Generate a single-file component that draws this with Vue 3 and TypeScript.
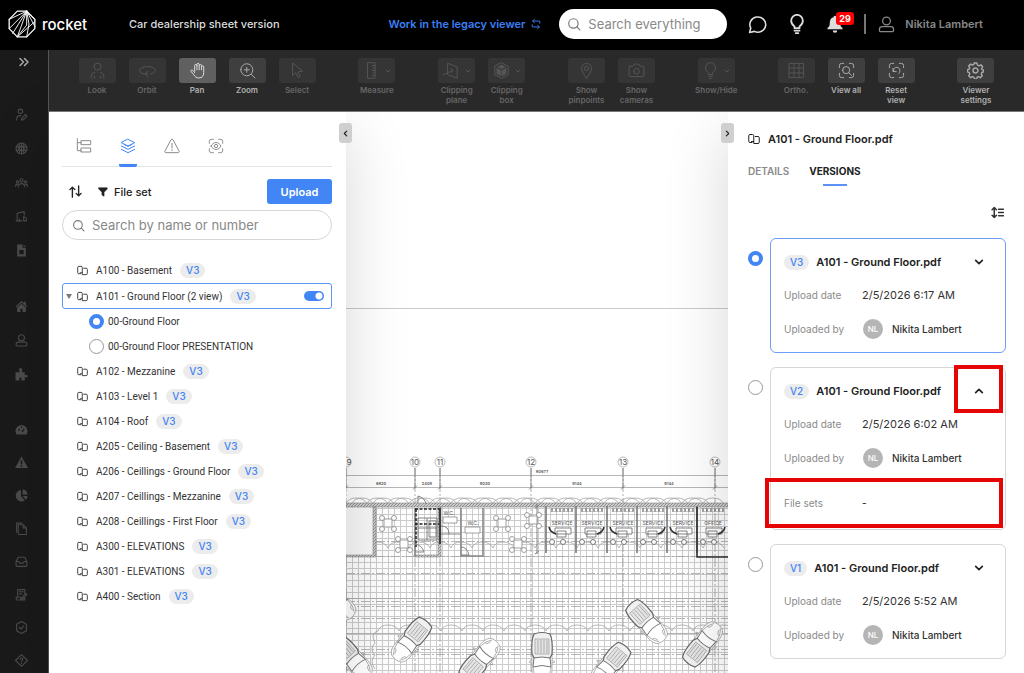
<script setup lang="ts">
import { h, ref } from 'vue'
import type { FunctionalComponent } from 'vue'

interface Shape {
  d: string
  fill?: boolean
  w?: number
}

const circle = (cx: number, cy: number, r: number): string =>
  `M${cx - r} ${cy}a${r} ${r} 0 1 0 ${2 * r} 0a${r} ${r} 0 1 0 ${-2 * r} 0z`

const corners = 'M2 8V5a3 3 0 0 1 3-3h3M16 2h3a3 3 0 0 1 3 3v3M22 16v3a3 3 0 0 1-3 3h-3M8 22H5a3 3 0 0 1-3-3v-3'
const bulb = 'M9 17v-2c-2-1.500-4-3.500-4-7a7 7 0 0 1 14 0c0 3.500-2 5.500-4 7v2z'

const icons: Record<string, Shape[]> = {
  logo: [
    { d: 'M8 1h8l7 7v8l-7 7H8l-7-7V8z', w: 1.1 },
    { d: 'M16 1L1 8M16 1L1 16M16 1L4 20M16 1L8 23M16 1l0 12l-8 10M16 1l2 11l-2 11M16 1l7 7M16 1l7 13M23 10L8 23', w: 0.8 },
  ],
  search: [{ d: circle(11, 11, 8) }, { d: 'M17 17l5 5' }],
  swap: [{ d: 'M21 10V5H4M8 1L4 5l4 4M3 14v5h17M16 15l4 4l-4 4' }],
  chat: [{ d: 'M2 22l1.500-5.500A10 9.600 0 1 1 8 20.700z' }],
  bulb: [{ d: bulb }, { d: 'M9 20h6M10.500 23h3' }],
  bell: [{ d: 'M12 1a2 2 0 0 1 2 2c4 1 5 4 5 8c0 4 1 5 3 6v2H2v-2c2-1 3-2 3-6c0-4 1-7 5-8a2 2 0 0 1 2-2zM9 20.500h6a3 3 0 0 1-6 0z', fill: true, w: 0 }],
  user: [{ d: circle(12, 7, 5.5) }, { d: 'M6 15h12c2.500 0 4 1.500 4 4v1.500c0 1-.5 1.500-1.500 1.500h-17C2.500 22 2 21.500 2 20.500V19c0-2.500 1.500-4 4-4z' }],
  dblright: [{ d: 'M4 5l7 7l-7 7M13 5l7 7l-7 7' }],
  look: [{ d: circle(12, 6.5, 5) }, { d: 'M3 23v-2c0-3.500 2-6 5-6.500M21 23v-2c0-3.500-2-6-5-6.500M7.500 23v-3M16.500 23v-3' }],
  orbit: [{ d: 'M8 17C4 16.500 1 14.500 1 12c0-3 5-5.500 11-5.500S23 9 23 12c0 2.500-3 4.500-7 5M12 13l-3 4l4 3.500M9 17h3' }],
  pan: [{ d: 'M8 13V5a1.600 1.600 0 0 1 3.200 0v-1.500a1.600 1.600 0 0 1 3.200 0V5a1.600 1.600 0 0 1 3.200 0v2a1.600 1.600 0 0 1 3.200 0v8c0 5-2.500 7.500-6.500 7.500c-4.300 0-6-2-7.500-4.500L3 13.500c-1-2 1-3 2.500-1.500L8 15M11.200 5v6M14.400 5v6M17.600 7v4' }],
  zoom: [{ d: circle(11, 11, 8.5) }, { d: 'M17.500 17.500l5 5M11 7.500v7M7.500 11h7' }],
  select: [{ d: 'M5 2v17l4.500-4l3.500 7l3-1.500l-3.500-6.500l6-1z' }],
  measure: [{ d: 'M7 1h10v22H7zM17 5h-4M17 8.500h-3M17 12h-4M17 15.500h-3M17 19h-4' }],
  clipplane: [{ d: 'M7 2l13 5v16L7 18zM1 18l12-6M11 9.500l3 2.500l-2 3' }],
  clipbox: [{ d: 'M12 1l9.500 5v12L12 23l-9.500-5V6z' }, { d: 'M5 8.500l6.500 3.200v8.300L5 16.700zM12.500 11.700L19 8.500v8.200L12.500 20zM12 4l6 3l-6 3l-6-3z', fill: true, w: 0.4 }],
  pin: [{ d: 'M12 23c-3-5-7-9-7-14a7 7 0 0 1 14 0c0 5-4 9-7 14z' }, { d: circle(12, 9, 3) }],
  camera: [{ d: 'M3 6h4l2-3h6l2 3h4a1.500 1.500 0 0 1 1.500 1.500V19a1.500 1.500 0 0 1-1.500 1.500H3A1.500 1.500 0 0 1 1.500 19V7.500A1.500 1.500 0 0 1 3 6z' }, { d: circle(12, 13, 4) }],
  grid: [{ d: 'M2 2h20v20H2zM2 8.500h20M2 15.500h20M8.500 2v20M15.500 2v20' }],
  viewall: [{ d: corners }, { d: circle(11.5, 11.5, 5) }, { d: 'M15 15l4 4' }],
  reset: [{ d: corners }, { d: 'M7 9v4.500h4.500M7.500 13C7.500 9.500 10 7 13 7.500c4 .8 5 5.500 2.500 8.500' }],
  gear: [
    { d: 'M10 1.500h4l.8 3l2 .9l2.800-1.500l2.500 2.800l-1.500 2.600l.8 1.700l2.100.5v2.500l-2.600.8l-.8 2l1.500 2.700l-2.800 2.600l-2.700-1.500l-1.800.8l-.8 2.600h-3l-.8-2.600l-2-.8l-2.600 1.500l-2.700-2.700l1.500-2.700l-.8-1.900l-2.600-.8v-3l2.600-.8l.8-1.800l-1.500-2.700l2.700-2.700l2.600 1.500l1.800-.8z', w: 2 },
    { d: circle(12, 12, 3.5), w: 2 },
  ],
  down: [{ d: 'M4 8l8 8l8-8' }],
  up: [{ d: 'M4 16l8-8l8 8' }],
  left: [{ d: 'M16 4l-8 8l8 8' }],
  right: [{ d: 'M8 4l8 8l-8 8' }],
  tree: [{ d: 'M2 1v18h6M2 7h6M8 4h14v6H8zM8 15h14v6H8z' }],
  layers: [{ d: 'M12 2l10 5l-10 5L2 7zM2 12l10 5l10-5M2 17l10 5l10-5M6 9.500l6 3l6-3' }],
  warn: [{ d: 'M12 2c.8 0 1.300.3 1.700 1L22.500 19.500c.6 1.200 0 2.500-1.500 2.500H3c-1.500 0-2.100-1.300-1.500-2.500L10.300 3c.4-.7.9-1 1.700-1zM12 8v7M12 17.500v1.500' }],
  eye: [{ d: corners }, { d: 'M4.500 12c3.500-7 11.500-7 15 0c-3.500 7-11.500 7-15 0z' }, { d: circle(12, 12, 2.5) }],
  sort: [{ d: 'M7 21V5M3 9l4-4l4 4M17 3v16M13 15l4 4l4-4' }],
  funnel: [{ d: 'M2 2h20v3l-7.500 7.500V22l-5-3v-6.500L2 5z', fill: true }],
  sheet: [{ d: 'M8 19H4a2.500 2.500 0 0 1-2.500-2.500v-11A2.500 2.500 0 0 1 4 3h5a2.500 2.500 0 0 1 2.500 2.500V17H7M14.500 7H20a2.500 2.500 0 0 1 2.500 2.500v9A2.500 2.500 0 0 1 20 21h-8.500V17' }],
  density: [{ d: 'M6 3v18M2 7l4-4l4 4M2 17l4 4l4-4M14 6h9M14 12h9M14 18h9' }],
  collab: [{ d: circle(10, 6, 4) }, { d: 'M3 22c0-5 2-8 6-8h2M12 20l7-8l3 3l-7 7h-3z' }],
  globe: [{ d: circle(12, 12, 10) }, { d: circle(12, 12, 4.5) }, { d: 'M2 9h20M2 15h20M12 2v20M8 3v18M16 3v18' }],
  group: [{ d: circle(12, 8, 3) }, { d: circle(4.5, 11, 2) }, { d: circle(19.5, 11, 2) }, { d: 'M6 20c0-8 12-8 12 0M1 19c0-3 1-4 4-4M23 19c0-3-1-4-4-4' }],
  site: [{ d: 'M4 19V6l13-3v6M2 20h11M16 20v-8l5 3v5zM8 20v-4' }],
  doc: [{ d: 'M4 1h10v6h6v16H4zM16 1l4 4h-4zM8 11v8h8v-8z', fill: true, w: 0 }],
  home: [{ d: 'M1 12L12 2l4 4V3h4v6l3 3l-1.500 1.500L12 5L2.500 13.500zM4 14l8-7l8 7v8h-6v-6h-4v6H4z', fill: true, w: 0 }],
  puzzle: [{ d: 'M1 8h7V5a3 3 0 1 1 5 0v3h5v5h5v4h-5v6h-6v-5H8v5H1z', fill: true, w: 0 }],
  gauge: [{ d: 'M3 21A11 11 0 1 1 21 21zM6 11v3h3v-3zM11 6v3h2V6zM16 10l-4 6l2 1l4-6z', fill: true, w: 0 }],
  alert: [{ d: 'M12 1l12 21H0zM10.500 8v7h3V8zM10.500 17v3h3v-3z', fill: true, w: 0 }],
  pie: [{ d: 'M11 2v11l7 8A10.500 10.500 0 1 1 11 2zM14 1c5 0 9 4 9 9h-9zM14 13h9c0 3-1 5-3 7z', fill: true, w: 0 }],
  copy: [{ d: 'M6 5h9l6 6v12H8a2 2 0 0 1-2-2zM15 5v6h6M3 19V2h10' }],
  inbox: [{ d: 'M2 12l4-8h12l4 8v7a2 2 0 0 1-2 2H4a2 2 0 0 1-2-2zM2 12h5l2 3h6l2-3h5' }],
  script: [{ d: 'M5 17V3h13v7M8 7h7M8 11h5M2 17h9v5H4c-2 0-2-2-2-5zM11 22l3-1l8-9l-2-2l-8 9zM11 22h7v-4' }],
  shield: [{ d: 'M12 1l9 5v12l-9 5l-9-5V6zM8 12l3 3l5-6' }],
  help: [{ d: 'M12 1l11 11l-11 11L1 12zM9.500 9.500c0-3 5-3 5 0c0 2-2.500 2-2.500 4M12 16v1.500' }],
}

const Icon: FunctionalComponent<{ name: string; size?: number; stroke?: number }> = (props) =>
  h(
    'svg',
    { viewBox: '0 0 24 24', width: props.size ?? 16, height: props.size ?? 16, 'aria-hidden': 'true' },
    icons[props.name].map((s) =>
      h('path', {
        d: s.d,
        fill: s.fill ? 'currentColor' : 'none',
        'fill-rule': 'evenodd',
        stroke: 'currentColor',
        'stroke-width': s.w ?? props.stroke ?? 1.5,
        'stroke-linejoin': 'round',
        'stroke-linecap': 'round',
      }),
    ),
  )
Icon.props = ['name', 'size', 'stroke']

interface Tool {
  label: string
  icon: string
  state?: 'on' | 'active'
  menu?: boolean
}
const toolGroups: Tool[][] = [
  [
    { label: 'Look', icon: 'look' },
    { label: 'Orbit', icon: 'orbit' },
    { label: 'Pan', icon: 'pan', state: 'active' },
    { label: 'Zoom', icon: 'zoom', state: 'on' },
    { label: 'Select', icon: 'select' },
  ],
  [{ label: 'Measure', icon: 'measure', menu: true }],
  [
    { label: 'Clipping\nplane', icon: 'clipplane', menu: true },
    { label: 'Clipping\nbox', icon: 'clipbox', menu: true },
  ],
  [
    { label: 'Show\npinpoints', icon: 'pin' },
    { label: 'Show\ncameras', icon: 'camera' },
  ],
  [{ label: 'Show/Hide', icon: 'bulb', menu: true }],
  [
    { label: 'Ortho.', icon: 'grid' },
    { label: 'View all', icon: 'viewall', state: 'on' },
    { label: 'Reset\nview', icon: 'reset', state: 'on' },
  ],
  [{ label: 'Viewer\nsettings', icon: 'gear', state: 'on' }],
]

const railGroups = [
  ['collab', 'globe', 'group', 'site', 'doc'],
  ['home', 'user', 'puzzle'],
  ['gauge', 'alert', 'pie', 'copy', 'inbox', 'script', 'shield', 'help'],
]

const panelTabs = ['tree', 'layers', 'warn', 'eye']

interface Sheet {
  name: string
  views?: string[]
}
const sheets: Sheet[] = [
  { name: 'A100 - Basement' },
  { name: 'A101 - Ground Floor (2 view)', views: ['00-Ground Floor', '00-Ground Floor PRESENTATION'] },
  { name: 'A102 - Mezzanine' },
  { name: 'A103 - Level 1' },
  { name: 'A104 - Roof' },
  { name: 'A205 - Ceiling - Basement' },
  { name: 'A206 - Ceillings - Ground Floor' },
  { name: 'A207 - Ceillings - Mezzanine' },
  { name: 'A208 - Ceillings - First Floor' },
  { name: 'A300 - ELEVATIONS' },
  { name: 'A301 - ELEVATIONS' },
  { name: 'A400 - Section' },
]

interface Version {
  id: string
  date: string
}
const versions: Version[] = [
  { id: 'V3', date: '2/5/2026 6:17 AM' },
  { id: 'V2', date: '2/5/2026 6:02 AM' },
  { id: 'V1', date: '2/5/2026 5:52 AM' },
]

const activeView = ref('00-Ground Floor')
const activeVersion = ref('V3')
const expanded = ref('V2')
const sheetVisible = ref(true)

const axes = [
  { x: 346, label: 349, n: '9' },
  { x: 415, label: 415, n: '10' },
  { x: 440, label: 440, n: '11' },
  { x: 531, label: 531, n: '12' },
  { x: 623, label: 623, n: '13' },
  { x: 715, label: 715, n: '14' },
]
const spans = [
  { x: 381, t: '6820' },
  { x: 427, t: '2408' },
  { x: 485, t: '9030' },
  { x: 577, t: '9144' },
  { x: 669, t: '9144' },
]
const tables = [[388, 523], [404, 544], [502, 523], [518, 544], [533, 520]]
const booths = [546, 576, 607, 637, 667, 697]
const cars = [
  [411, 640, 39], [480, 660, 221], [542, 657, 0], [647, 622, -42],
  [703, 644, 218], [610, 665, 40], [352, 658, -42], [334, 600, -50],
]
const clouds = (x: number, y: number, n: number): string => `M${x} ${y}` + 'q2-6 10-6t11 6'.repeat(n)
</script>

<template>
  <div class="app">
    <header class="top">
      <a class="brand" href="#"><Icon name="logo" :size="28" /><span>rocket</span></a>
      <h1>Car dealership sheet version</h1>
      <a class="legacy" href="#">Work in the legacy viewer <Icon name="swap" :size="10" :stroke="2.2" /></a>
      <label class="global-search">
        <Icon name="search" :size="14" :stroke="2" />
        <input type="search" placeholder="Search everything" aria-label="Search everything" />
      </label>
      <button class="top-btn" aria-label="Chat"><Icon name="chat" :size="19" :stroke="2" /></button>
      <button class="top-btn" aria-label="Tips"><Icon name="bulb" :size="20" :stroke="2.2" /></button>
      <button class="top-btn bell" aria-label="Notifications">
        <Icon name="bell" :size="18" /><span class="count">29</span>
      </button>
      <button class="account"><Icon name="user" :size="17" :stroke="1.8" /><span>Nikita Lambert</span></button>
    </header>

    <div class="body">
      <nav class="rail" aria-label="Main">
        <button class="expand" aria-label="Expand menu"><Icon name="dblright" :size="12" :stroke="3" /></button>
        <div v-for="(group, g) in railGroups" :key="g" class="rail-group">
          <a v-for="item in group" :key="item" href="#" :aria-label="item">
            <Icon :name="item" :size="13" :stroke="2" />
          </a>
        </div>
      </nav>

      <div class="work">
        <div class="toolbar">
          <div v-for="(group, g) in toolGroups" :key="g" class="tool-group">
            <button v-for="tool in group" :key="tool.label" class="tool" :class="tool.state">
              <span class="tile">
                <Icon :name="tool.icon" :size="17" :stroke="1.4" />
                <Icon v-if="tool.menu" class="caret" name="down" :size="6" :stroke="4" />
              </span>
              <span class="tool-label">{{ tool.label }}</span>
            </button>
          </div>
        </div>

        <div class="stage">
          <aside class="sheets">
            <div class="icon-tabs" role="tablist">
              <button
                v-for="tab in panelTabs"
                :key="tab"
                role="tab"
                :aria-label="tab"
                :aria-selected="tab === 'layers'"
                :class="{ current: tab === 'layers' }"
              >
                <Icon :name="tab" :size="16" :stroke="1.5" />
              </button>
            </div>
            <div class="filter">
              <button class="plain" aria-label="Sort"><Icon name="sort" :size="15" :stroke="2.2" /></button>
              <button class="plain"><Icon name="funnel" :size="10" />File set</button>
              <button class="upload">Upload</button>
            </div>
            <label class="sheet-search">
              <Icon name="search" :size="13" :stroke="2" />
              <input type="search" placeholder="Search by name or number" aria-label="Search by name or number" />
            </label>
            <ul class="tree">
              <li v-for="sheet in sheets" :key="sheet.name">
                <div class="row" :class="{ selected: sheet.views }">
                  <span v-if="sheet.views" class="twisty"></span>
                  <Icon name="sheet" :size="11" :stroke="2" />
                  <span>{{ sheet.name }}</span>
                  <span class="pill">V3</span>
                  <input
                    v-if="sheet.views"
                    v-model="sheetVisible"
                    class="switch"
                    type="checkbox"
                    role="switch"
                    aria-label="Show sheet"
                  />
                </div>
                <label v-for="view in sheet.views" :key="view" class="row view">
                  <input v-model="activeView" class="radio" type="radio" name="view" :value="view" />
                  <span>{{ view }}</span>
                </label>
              </li>
            </ul>
            <button class="handle handle-left" aria-label="Collapse sheets"><Icon name="left" :size="7" :stroke="4" /></button>
          </aside>

          <main class="canvas">
            <svg viewBox="346 112 382 561" preserveAspectRatio="xMidYMin slice" aria-label="Ground floor plan">
              <defs>
                <pattern id="tiles" x="346" y="508" width="6" height="6" patternUnits="userSpaceOnUse">
                  <path d="M0 .5h6M.5 0v6" class="tile-line" />
                </pattern>
                <pattern id="hatch" width="3" height="3" patternUnits="userSpaceOnUse">
                  <rect width="3" height="3" fill="#ccc" />
                  <path d="M0 3l3-3" stroke="#777" stroke-width=".7" />
                </pattern>
                <g id="car">
                  <path d="M-8-23Q0-26 8-23Q10-18 10-8V12Q10 22 5 24Q0 26-5 24Q-10 22-10 12V-8Q-10-18-8-23z" fill="#fff" stroke="#999" stroke-width=".7" />
                  <path d="M-8-23Q0-26 8-23Q11-17 10-3L8 1H-8L-10-3Q-11-17-8-23z" fill="#f0f0f0" stroke="#666" stroke-width="1.200" />
                  <path d="M-7-18h14v15h-14zM-4-17v13M-1-17v13M2-17v13M5-17v13" fill="#e4e4e4" stroke="#999" stroke-width=".7" />
                  <path d="M-8 1Q0-1 8 1L9 10Q0 7-9 10z" fill="#fff" stroke="#777" stroke-width="1" />
                  <path d="M-9 10Q-8 19-4 23M9 10Q8 19 4 23M-10 3l-3 2l3 1M10 3l3 2l-3 1M-8 17q3-2 4 4M8 17q-3-2-4 4" fill="none" stroke="#999" stroke-width=".7" />
                </g>
                <g id="table" fill="#fff" stroke="#888" stroke-width=".8">
                  <rect x="-4" y="-4" width="8" height="8" />
                  <circle cx="-6" cy="-5" r="2.500" /><circle cx="6" cy="-5" r="2.500" />
                  <circle cx="-6" cy="6" r="2.500" /><circle cx="6" cy="6" r="2.500" />
                </g>
              </defs>

              <path d="M346 308.500H728" stroke="#c9c9c9" />
              <rect x="346" y="507" width="382" height="166" fill="url(#tiles)" />
              <g class="thin">
                <path d="M346 475.500H728M346 487.500H728M346 598.500H728M346 633.500H728" />
                <path d="M346 541.500H728M346 556.500H728M346 573.500H728M346 601.500H728M346 606.500H728M346 618.500H728M346 649.500H728M346 654.500H728" stroke-dasharray="9 2 2 2" />
                <path :d="clouds(346, 504, 18)" />
                <path :d="clouds(352, 504, 17)" />
                <path :d="clouds(346, 548, 18)" />
                <path :d="clouds(378, 631, 17)" />
                <path d="M378 631q-8 2-3 12q-6 6 0 12q-6 6 0 14" />
              </g>
              <g v-for="a in axes" :key="a.n">
                <path :d="`M${a.x} 468V673`" class="axis" />
                <path :d="`M${a.x - 2} 489.500l4-4M${a.x} 468v20`" stroke="#777" stroke-width=".8" />
                <circle :cx="a.x" cy="462" r="5" fill="#fff" stroke="#aaa" stroke-width=".8" />
                <text :x="a.label" y="465" class="axis-no">{{ a.n }}</text>
              </g>
              <text v-for="s in spans" :key="s.x" :x="s.x" y="485" class="dim">{{ s.t }}</text>
              <text x="542" y="473" class="dim">80677</text>

              <rect x="346" y="503" width="382" height="4" fill="url(#hatch)" stroke="#888" stroke-width=".6" />
              <rect x="346" y="508" width="27" height="47" fill="#f8f8f8" />
              <path d="M373 507h3v50h-30v-2h27z" fill="url(#hatch)" stroke="#777" stroke-width=".5" />
              <path d="M438 507h3v50h-27v-2h24z" fill="url(#hatch)" stroke="#777" stroke-width=".5" />
              <path d="M461 508V556H483V508M415 508v48" stroke="#888" stroke-width="1.600" fill="none" />
              <path d="M415 509h25M415 524h24M416 509v38" stroke="#222" stroke-width="1.500" stroke-dasharray="3 1.500" fill="none" />
              <path d="M440 508v36" stroke="#333" stroke-width="1.800" />
              <path d="M418 518h19v22h-19zM418 528h19M427 518v22M429 521h7v16h-7zM418 503v-7q7 2 8 8M415 552h9q-2-7-9-8M441 534h19M441 526q8 0 8 8M461 555h8q-2-8-8-8" stroke="#777" stroke-width=".9" fill="none" />
              <path d="M443 517h14v6h-14zM465 527h15v6h-15z" fill="#fff" stroke="#888" stroke-width=".8" />
              <text x="449" y="515" class="room">W.C.</text>
              <text x="473" y="525" class="room">W.C.</text>
              <path d="M537 504v50M535 508l4-3M535 554l4-3" stroke="#777" stroke-width=".9" />
              <use v-for="(t, i) in tables" :key="i" href="#table" :x="t[0]" :y="t[1]" />

              <g v-for="(x, i) in booths" :key="x">
                <path :d="`M${x} 506v47`" stroke="#777" stroke-width="1.600" />
                <path :d="`M${x + 6} 508v4M${x + 10} 508v4M${x + 14} 508v4M${x + 18} 508v4M${x + 22} 508v4M${x + 26} 508v4`" stroke="#444" />
                <path :d="`M${x + 5} 508.500h22M${x + 5} 511.500h22`" stroke="#aaa" stroke-width=".6" />
                <path :d="`M${x + 9} 528h16v6h-16zM${x + 11} 531h9v6h-9z`" fill="#fff" stroke="#666" stroke-width=".8" />
                <path :d="i % 2 ? `M${x + 28} 527q-1 5-7 7` : `M${x + 3} 527q1 5 7 7`" stroke="#333" stroke-width="1.500" fill="none" />
                <circle :cx="x + 6" cy="542" r="2.500" fill="#fff" stroke="#777" />
                <circle :cx="x + 17" cy="542" r="2.500" fill="#fff" stroke="#777" />
                <text :x="x + 16" y="525" class="room">{{ i === 5 ? 'OFFICE' : 'SERVICE' }}</text>
              </g>
              <path d="M697 507v50h31" stroke="#333" stroke-width="1.600" fill="none" />
              <use v-for="(c, i) in cars" :key="i" href="#car" :transform="`translate(${c[0]} ${c[1]}) rotate(${c[2]})`" />
            </svg>
          </main>

          <aside class="details">
            <h2><Icon name="sheet" :size="12" :stroke="2" />A101 - Ground Floor.pdf</h2>
            <div class="text-tabs" role="tablist">
              <button role="tab" aria-selected="false">DETAILS</button>
              <button role="tab" aria-selected="true" class="current">VERSIONS</button>
            </div>
            <button class="density" aria-label="Sort versions"><Icon name="density" :size="13" :stroke="2.8" /></button>
            <div class="versions">
              <div v-for="v in versions" :key="v.id" class="version">
                <input v-model="activeVersion" class="radio" type="radio" name="version" :value="v.id" :aria-label="v.id" />
                <article class="card" :class="{ chosen: v.id === activeVersion }">
                  <div class="card-head">
                    <span class="pill">{{ v.id }}</span>
                    <h3>A101 - Ground Floor.pdf</h3>
                    <button aria-label="Toggle details" @click="expanded = expanded === v.id ? '' : v.id">
                      <Icon :name="v.id === expanded ? 'up' : 'down'" :size="10" :stroke="4" />
                    </button>
                  </div>
                  <dl>
                    <div><dt>Upload date</dt><dd class="date">{{ v.date }}</dd></div>
                    <div><dt>Uploaded by</dt><dd class="who"><span class="avatar">NL</span>Nikita Lambert</dd></div>
                    <div v-if="v.id === expanded" class="sets"><dt>File sets</dt><dd>-</dd></div>
                  </dl>
                  <template v-if="v.id === expanded">
                    <span class="mark mark-toggle"></span>
                    <span class="mark mark-sets"></span>
                  </template>
                </article>
              </div>
            </div>
            <button class="handle handle-right" aria-label="Collapse details"><Icon name="right" :size="7" :stroke="4" /></button>
          </aside>
        </div>
      </div>
    </div>
  </div>
</template>

<style>
body {
  margin: 0;
}
</style>

<style scoped>
* {
  box-sizing: border-box;
}
.app {
  display: flex;
  flex-direction: column;
  height: 100vh;
  overflow: hidden;
  background: #fff;
  color: #333;
  font-family: Inter, "Liberation Sans", sans-serif;
  font-size: 10px;
}
button,
input {
  font: inherit;
  color: inherit;
  margin: 0;
}
button {
  border: 0;
  padding: 0;
  background: none;
  display: flex;
  align-items: center;
  justify-content: center;
}
a {
  color: inherit;
  text-decoration: none;
}
svg {
  flex: none;
  display: block;
}
h1,
h2,
h3,
ul,
dl,
dd {
  margin: 0;
  padding: 0;
}

.top {
  display: flex;
  align-items: center;
  flex: none;
  height: 50px;
  padding: 0 41px 2px 8px;
  background: #000;
  color: #ddd;
}
.brand {
  display: flex;
  align-items: center;
  gap: 6px;
  width: 121px;
  color: #fff;
  font-size: 15px;
  font-weight: 500;
}
.top h1 {
  flex: 1;
  font-size: 11px;
  font-weight: 500;
}
.legacy {
  display: flex;
  align-items: center;
  gap: 6px;
  margin-right: 18px;
  color: #3b7ff5;
  font-size: 11px;
  font-weight: 600;
}
.global-search,
.sheet-search {
  display: flex;
  align-items: center;
  gap: 7px;
  height: 30px;
  border-radius: 15px;
  background: #fff;
  color: #777;
}
.global-search {
  width: 168px;
  margin-right: 20px;
  padding: 0 8px;
}
.global-search input,
.sheet-search input {
  flex: 1;
  min-width: 0;
  padding: 0;
  border: 0;
  outline: 0;
  background: none;
  font-size: 13px;
}
input::placeholder {
  color: #888;
  opacity: 1;
}
.top-btn {
  width: 20px;
  margin-right: 20px;
}
.bell {
  position: relative;
  width: 39px;
  height: 20px;
  margin-right: 0;
  padding-right: 21px;
  border-right: 2px solid #777;
}
.count {
  position: absolute;
  top: -2px;
  left: 9px;
  padding: 0 3px;
  border-radius: 3px;
  background: #f00;
  color: #fff;
  font-size: 9px;
  font-weight: 700;
  line-height: 13px;
}
.account {
  gap: 10px;
  margin-left: 12px;
  color: #888;
  font-size: 11px;
  font-weight: 600;
}

.body {
  display: flex;
  flex: 1;
  min-height: 0;
}
.rail {
  flex: none;
  width: 49px;
  padding-right: 6px;
  overflow: hidden;
  border-right: 1px solid #555;
  background: #1a1a1a;
  color: #4c4c4c;
}
.expand {
  width: 47px;
  height: 24px;
  margin-bottom: 24px;
  color: #aaa;
}
.rail-group {
  margin-bottom: 22px;
}
.rail-group a {
  display: flex;
  align-items: center;
  justify-content: center;
  height: 34px;
}
.rail-group:first-of-type {
  margin-top: -1px;
}
.rail-group:last-child a {
  height: 33px;
}
.work {
  display: flex;
  flex: 1;
  flex-direction: column;
  min-width: 0;
}
.toolbar {
  position: relative;
  z-index: 3;
  display: flex;
  flex: none;
  justify-content: space-between;
  height: 62px;
  padding: 8px 23px 0;
  border-bottom: 1px solid #777;
  background: #292929;
}
.tool-group {
  display: flex;
}
.tool {
  flex-direction: column;
  justify-content: flex-start;
  width: 50px;
  color: #666;
}
.tile {
  display: flex;
  align-items: center;
  justify-content: center;
  gap: 5px;
  width: 37px;
  height: 25px;
  margin-bottom: 2px;
  border-radius: 3px;
  background: #353535;
  color: #555;
}
.tool.on,
.tool.active {
  color: #b0b0b0;
}
.on .tile {
  background: #3f3f3f;
  color: #aaa;
}
.active .tile {
  background: #606060;
  color: #ddd;
}
.tool-label {
  font-size: 8px;
  font-weight: 600;
  line-height: 10px;
  white-space: pre;
}

.stage {
  position: relative;
  display: flex;
  flex: 1;
  min-height: 0;
}
.sheets,
.details {
  position: relative;
  z-index: 1;
  flex: none;
  width: 297px;
  background: #fff;
  box-shadow: 0 20px 60px rgba(0, 0, 0, 0.16);
}
.sheets {
  padding: 12px 14px 0 13px;
}
.icon-tabs {
  display: flex;
  height: 43px;
  border-bottom: 1px solid #e4e4e4;
}
.icon-tabs button {
  width: 18px;
  margin: 4px 13px -1px;
  border-bottom: 3px solid transparent;
  color: #8c8c8c;
}
.icon-tabs .current {
  border-color: #4285f4;
  border-radius: 2px;
  color: #4285f4;
}
.filter {
  display: flex;
  align-items: center;
  gap: 15px;
  height: 25px;
  margin: 12px 0 6px;
  padding-left: 6px;
}
.plain {
  gap: 6px;
  color: #222;
  font-size: 11px;
  font-weight: 500;
}
.upload {
  width: 65px;
  height: 25px;
  margin-left: auto;
  border-radius: 3px;
  background: #4285f4;
  color: #fff;
  font-size: 11px;
  font-weight: 600;
}
.sheet-search {
  padding: 0 9px;
  border: 1px solid #d6d6d6;
}
.tree {
  margin-top: 18px;
  list-style: none;
}
.row {
  display: flex;
  align-items: center;
  gap: 8px;
  height: 25px;
  padding: 0 7px 0 14px;
  border: 1px solid transparent;
  font-family: Roboto, "Liberation Sans", sans-serif;
  font-size: 10px;
}
.row.selected {
  position: relative;
  height: 26px;
  border-color: #5b96f5;
  border-radius: 3px;
}
.twisty {
  position: absolute;
  left: 3px;
  border: 3px solid transparent;
  border-top: 5px solid #777;
  border-bottom: 0;
}
.view {
  gap: 4px;
  padding-left: 26px;
}
.pill {
  padding: 0 6px;
  border-radius: 8px;
  background: #ececec;
  color: #4285f4;
  font-family: Inter, "Liberation Sans", sans-serif;
  font-size: 10px;
  font-weight: 500;
  line-height: 15px;
}
.radio {
  flex: none;
  appearance: none;
  width: 15px;
  height: 15px;
  border: 1px solid #999;
  border-radius: 50%;
  background: #fff;
}
.radio:checked {
  border: 4px solid #4285f4;
}
.switch {
  appearance: none;
  width: 20px;
  height: 10px;
  margin-left: auto;
  border-radius: 5px;
  background: radial-gradient(circle at 15px 5px, #fff 3px, #4285f4 4px);
}
.switch:not(:checked) {
  background: radial-gradient(circle at 5px 5px, #fff 3px, #bbb 4px);
}
.handle {
  position: absolute;
  top: 11px;
  width: 13px;
  height: 20px;
  border-radius: 3px;
  background: #cfcfcf;
  color: #222;
}
.handle-left {
  right: -6px;
}
.handle-right {
  left: -7px;
}

.canvas {
  flex: 1;
  min-width: 0;
  overflow: hidden;
}
.canvas svg {
  width: 100%;
  height: 100%;
}
.tile-line {
  stroke: #ccc;
  stroke-width: 1;
}
.thin {
  fill: none;
  stroke: #a4a4a4;
  stroke-width: 0.8;
}
.axis {
  stroke: #999;
  stroke-width: 0.8;
  stroke-dasharray: 9 2 2 2;
}
.axis-no,
.dim,
.room {
  fill: #555;
  font-size: 8px;
  text-anchor: middle;
}
.dim {
  font-size: 4px;
  font-weight: 600;
}
.room {
  font-size: 5px;
}

.details {
  width: 296px;
  padding: 17px 18px 0 20px;
}
.details h2 {
  display: flex;
  align-items: center;
  gap: 8px;
  height: 20px;
  font-size: 11px;
  font-weight: 600;
  color: #222;
}
.text-tabs {
  display: flex;
  gap: 20px;
  height: 37px;
  margin-bottom: 20px;
  font-size: 10px;
  font-weight: 600;
}
.text-tabs button {
  position: relative;
  padding-top: 7px;
  color: #8a8a8a;
}
.text-tabs .current {
  font-weight: 700;
  color: #222;
}
.text-tabs .current::after {
  position: absolute;
  bottom: 0;
  left: 50%;
  width: 24px;
  margin-left: -12px;
  border-bottom: 2px solid #5b92f5;
  content: '';
}
.density {
  margin-left: auto;
  margin-right: 2px;
}
.versions {
  display: flex;
  flex-direction: column;
  gap: 14px;
  margin-top: 19px;
}
.version {
  display: flex;
  align-items: flex-start;
  gap: 7px;
}
.version > .radio {
  margin-top: 13px;
}
.card {
  position: relative;
  flex: 1;
  padding: 7px 13px 6px;
  border: 1px solid #d6d6d6;
  border-radius: 6px;
}
.card.chosen {
  border-color: #6ba0f6;
}
.card-head {
  display: flex;
  align-items: center;
  gap: 7px;
  height: 32px;
}
.card-head h3 {
  flex: 1;
  font-size: 11px;
  font-weight: 600;
  color: #222;
}
.card-head button {
  width: 26px;
  height: 24px;
  color: #222;
}
dl > div {
  display: flex;
  align-items: center;
  height: 34px;
}
dt {
  width: 78px;
  color: #8a8a8a;
}
dd {
  font-weight: 500;
}
dd.date {
  font-size: 11px;
  font-weight: 400;
}
.who {
  display: flex;
  align-items: center;
  gap: 9px;
}
.avatar {
  width: 20px;
  margin-left: 1px;
  border-radius: 10px;
  background: #b5b5b5;
  color: #fff;
  font-size: 8px;
  line-height: 20px;
  text-align: center;
}
dl > .sets {
  height: 48px;
  padding-top: 8px;
}
.mark {
  position: absolute;
  right: 2px;
  border: 4px solid #e60505;
  pointer-events: none;
}
.mark-toggle {
  top: -3px;
  width: 49px;
  height: 48px;
}
.mark-sets {
  top: 110px;
  left: -6px;
  height: 50px;
}
</style>
